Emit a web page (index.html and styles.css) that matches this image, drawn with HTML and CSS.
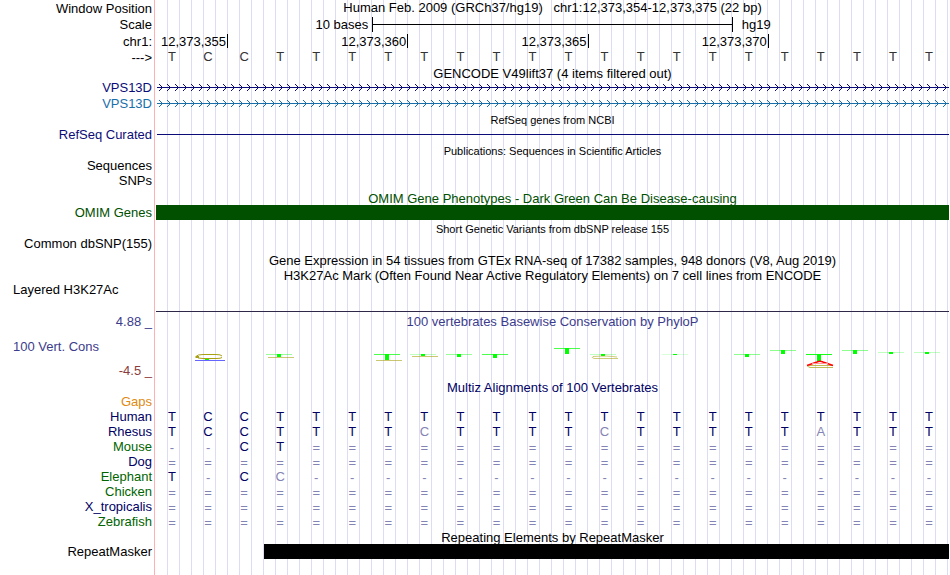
FILE: index.html
```html
<!DOCTYPE html>
<html lang="en">
<head>
    <meta charset="UTF-8">
    <meta name="viewport" content="width=device-width, initial-scale=1.0">
    <title>Human chr1:12,373,354-12,373,375</title>
    <link rel="stylesheet" href="styles.css">
</head>
<body>
<main class="browser">
    <div class="row position">
        <div class="label">Window Position</div>
        <div class="plot title pre">Human Feb. 2009 (GRCh37/hg19)   chr1:12,373,354-12,373,375 (22 bp)</div>
    </div>
    <div class="row tall">
        <div class="label">Scale</div>
        <div class="plot columns">
            <span class="scale-text">10 bases</span>
            <span class="scale-bar"></span>
            <span class="assembly">hg19</span>
        </div>
    </div>
    <div class="row position">
        <div class="label">chr1:</div>
        <div class="plot columns">
            <span class="tick first">12,373,355</span>
            <span class="tick">12,373,360</span>
            <span class="tick">12,373,365</span>
            <span class="tick">12,373,370</span>
        </div>
    </div>
    <div class="row">
        <div class="label">---&gt;</div>
        <div class="plot columns bases ruler" data-seq="TCCTTTTTTTTTTTTTTTTTTT"></div>
    </div>

    <div class="row"><div class="plot title">GENCODE V49lift37 (4 items filtered out)</div></div>
    <div class="row tall navy">
        <div class="label">VPS13D</div>
        <div class="plot">
            <svg class="intron" width="100%" height="15">
                <defs>
                    <pattern id="arrows" width="8" height="15" patternUnits="userSpaceOnUse">
                        <path d="M3 4L6.500 7.500L3 11" fill="none" stroke="#0c0c78"/>
                    </pattern>
                </defs>
                <rect x="1" y="7" width="100%" height="1" fill="#0c0c78"/>
                <rect x="1" width="100%" height="15" fill="url(#arrows)"/>
            </svg>
        </div>
    </div>
    <div class="row tall blue">
        <div class="label">VPS13D</div>
        <div class="plot">
            <svg class="intron" width="100%" height="15">
                <defs>
                    <pattern id="arrowsBlue" width="8" height="15" patternUnits="userSpaceOnUse">
                        <path d="M3 4L6.500 7.500L3 11" fill="none" stroke="#1a6fab"/>
                    </pattern>
                </defs>
                <rect x="1" y="7" width="100%" height="1" fill="#1a6fab"/>
                <rect x="1" width="100%" height="15" fill="url(#arrowsBlue)"/>
            </svg>
        </div>
    </div>

    <div class="row"><div class="plot title small">RefSeq genes from NCBI</div></div>
    <div class="row tall navy">
        <div class="label">RefSeq Curated</div>
        <div class="plot">
            <svg class="intron" width="100%" height="15"><rect x="1" y="7" width="100%" height="1" fill="#0c0c78"/></svg>
        </div>
    </div>

    <div class="row"><div class="plot title small">Publications: Sequences in Scientific Articles</div></div>
    <div class="row"><div class="label">Sequences</div></div>
    <div class="row tall"><div class="label">SNPs</div></div>

    <div class="row tall green"><div class="plot title">OMIM Gene Phenotypes - Dark Green Can Be Disease-causing</div></div>
    <div class="row green">
        <div class="label">OMIM Genes</div>
        <div class="plot bar"></div>
    </div>

    <div class="row tall"><div class="plot title small">Short Genetic Variants from dbSNP release 155</div></div>
    <div class="row tall"><div class="label">Common dbSNP(155)</div></div>

    <div class="row"><div class="plot title">Gene Expression in 54 tissues from GTEx RNA-seq of 17382 samples, 948 donors (V8, Aug 2019)</div></div>
    <div class="row"><div class="plot title">H3K27Ac Mark (Often Found Near Active Regulatory Elements) on 7 cell lines from ENCODE</div></div>
    <div class="row signal">
        <div class="label left">Layered H3K27Ac</div>
        <div class="plot baseline"></div>
    </div>

    <div class="row conservation">
        <div class="label axis">
            <span>4.88 _</span>
            <span class="left">100 Vert. Cons</span>
            <span class="min">-4.5 _</span>
        </div>
        <div class="plot">
            <div class="title">100 vertebrates Basewise Conservation by PhyloP</div>
            <!-- y = 23 is the zero line of the phyloP score -->
            <svg class="logo" width="100%" height="48" viewBox="0 0 793 48" preserveAspectRatio="none">
                <g fill="#0f0">
                    <path opacity=".4" d="M110 23h26v1h-26zM290 23h26v1h-26z"/>
                    <path opacity=".7" d="M218 23h26v1h-26zM326 23h26v1h-26zM398 17h26v1h-26z"/>
                    <path opacity=".25" d="M254 23h26v1h-26zM434 23h26v1h-26zM722 21h26v1h-26zM758 21h26v1h-26z"/>
                    <path opacity=".15" d="M506 23h26v1h-26z"/>
                    <path opacity=".45" d="M578 23h26v1h-26zM614 19h26v1h-26zM686 19h26v1h-26z"/>
                    <path opacity=".9" d="M650 23h26v1h-26z"/>
                    <path d="M49 28h4v1h-4zM121 23h4v3h-4zM229 23h4v6h-4zM265 23h4v2h-4zM301 23h4v3h-4zM337 23h4v4h-4zM409 17h4v6h-4zM445 23h4v2h-4zM517 23h4v1h-4zM589 23h4v3h-4zM625 19h4v4h-4zM661 23h4v7h-4zM697 19h4v4h-4zM733 21h4v2h-4zM769 21h4v2h-4z"/>
                </g>
                <g fill="none" stroke="#a8a010">
                    <path d="M66 25Q65 23.500 60 23.500H47Q41 23.500 40 25.500Q41 27.500 47 27.500H60Q65 27.500 66 26.500"/>
                    <path stroke-width="2" d="M39.500 26H43"/>
                    <path opacity=".6" d="M112 26.500h26M220 29.500h26M256 25.500h26"/>
                    <path opacity=".55" d="M461 26Q452 24.500 437 25.500Q435 26.500 438 27.500H462"/>
                    <path opacity=".7" d="M677 34.500H654Q650 35.500 654 36.500H677"/>
                </g>
                <path fill="#66f" d="M39 29h30v1h-30z"/>
                <path fill="none" stroke="#f00" stroke-width="1.500" d="M651 34.500L661 31Q664 29.500 667 31L677 34.500"/>
                <path fill="#f99" d="M656 32h16v1h-16z"/>
            </svg>
        </div>
    </div>

    <div class="row human"><div class="plot title">Multiz Alignments of 100 Vertebrates</div></div>
    <div class="row"><div class="label gaps">Gaps</div></div>
    <div class="row human">
        <div class="label">Human</div>
        <div class="plot columns bases" data-seq="TCCTTTTTTTTTTTTTTTTTTT"></div>
    </div>
    <div class="row human">
        <div class="label">Rhesus</div>
        <div class="plot columns bases" data-seq="TCCTTTTcTTTTcTTTTTaTTT"></div>
    </div>
    <div class="row human">
        <div class="label alt">Mouse</div>
        <div class="plot columns bases" data-seq="--CT=================="></div>
    </div>
    <div class="row human">
        <div class="label">Dog</div>
        <div class="plot columns bases" data-seq="======================"></div>
    </div>
    <div class="row human">
        <div class="label alt">Elephant</div>
        <div class="plot columns bases" data-seq="T-Cc------------------"></div>
    </div>
    <div class="row human">
        <div class="label alt">Chicken</div>
        <div class="plot columns bases" data-seq="======================"></div>
    </div>
    <div class="row human">
        <div class="label">X_tropicalis</div>
        <div class="plot columns bases" data-seq="======================"></div>
    </div>
    <div class="row human">
        <div class="label alt">Zebrafish</div>
        <div class="plot columns bases" data-seq="======================"></div>
    </div>

    <div class="row"><div class="plot title">Repeating Elements by RepeatMasker</div></div>
    <div class="row">
        <div class="label">RepeatMasker</div>
        <div class="plot columns"><span class="repeat"></span></div>
    </div>
</main>

<script>
    // lower case = differs from human, drawn pale like the gap signs
    document.querySelectorAll(".bases").forEach(function (row) {
        for (const base of row.dataset.seq) {
            const cell = document.createElement("span");
            cell.textContent = base.toUpperCase();
            if (!/[A-Z]/.test(base)) cell.classList.add("pale");
            if (base === "=" || base === "-") cell.classList.add("gap");
            row.appendChild(cell);
        }
    });
</script>
</body>
</html>
```
FILE: styles.css
```css
body {
    margin: 0;
    font-family: "Liberation Sans", Arial, sans-serif;
    font-size: 13px;
    line-height: 15px;
    color: #000;
    background-color: #fff;
}

/* pink edge of the label column, then a guide line every 12px */
.browser {
    min-height: 100vh;
    background-image:
        linear-gradient(#ffb0b0, #ffb0b0),
        repeating-linear-gradient(to right, transparent 0 11px, #dcdcf5 11px 12px);
    background-position: 154px 0, 156px 0;
    background-size: 1px 100%, 100% 100%;
    background-repeat: no-repeat;
}

.row {
    display: grid;
    grid-template-columns: 152px 1fr;
    column-gap: 4px;
    padding-right: 1px;
    height: 15px;
}

.tall {
    height: 16px;
    line-height: 16px;
}

.position {
    height: 17px;
    line-height: 17px;
}

.label {
    grid-column: 1;
    text-align: right;
    white-space: nowrap;
}

.left {
    text-align: left;
    padding-left: 13px;
}

.plot {
    grid-column: 2;
    min-width: 0;
}

.title {
    line-height: 17px;
    text-align: center;
    white-space: nowrap;
}

.tall .title {
    line-height: 19px;
}

.pre {
    white-space: pre;
    line-height: 15px;
}

.small {
    font-size: 11px;
}

.columns {
    display: grid;
    grid-template-columns: repeat(22, minmax(0, 1fr));
}

/* scale and coordinates */
.scale-text {
    grid-column: 1 / 7;
    padding-right: 4px;
    text-align: right;
}

.scale-bar {
    grid-column: 7 / 17;
    height: 15px;
    border: solid #000;
    border-width: 0 1px;
    background: linear-gradient(#000, #000) 0 7px / 100% 1px no-repeat;
}

.assembly {
    grid-column: 17 / 20;
    padding-left: 9px;
}

.tick {
    grid-column: span 5;
    height: 14px;
    margin-top: 1px;
    padding-right: 1px;
    border-right: 1px solid #000;
    line-height: 15px;
    text-align: right;
}

.first {
    grid-column: span 2;
}

.bases span {
    padding-right: 4px;
    text-align: center;
}

.ruler {
    line-height: 13px;
    color: #333;
}

.pale {
    color: #8484b4;
}

.bases .gap {
    line-height: 17px;
}

/* tracks */
.navy {
    color: #0c0c78;
}

.blue {
    color: #1a6fab;
}

.green {
    color: #005000;
}

.human {
    color: #000064;
}

.alt {
    color: #006400;
}

.gaps {
    color: #e08a10;
}

.intron,
.logo {
    display: block;
}

.bar {
    background-color: #005000;
}

.signal {
    height: 30px;
}

.baseline {
    border-bottom: 1px solid #302848;
}

.conservation {
    height: 67px;
    color: #3c3c8c;
}

.conservation .title {
    line-height: 19px;
}

.axis {
    display: flex;
    flex-direction: column;
    justify-content: space-between;
    padding: 2px 0 1px;
}

.min {
    color: #8c3c3c;
}

.repeat {
    grid-column: 4 / -1;
    background-color: #000;
}
```
